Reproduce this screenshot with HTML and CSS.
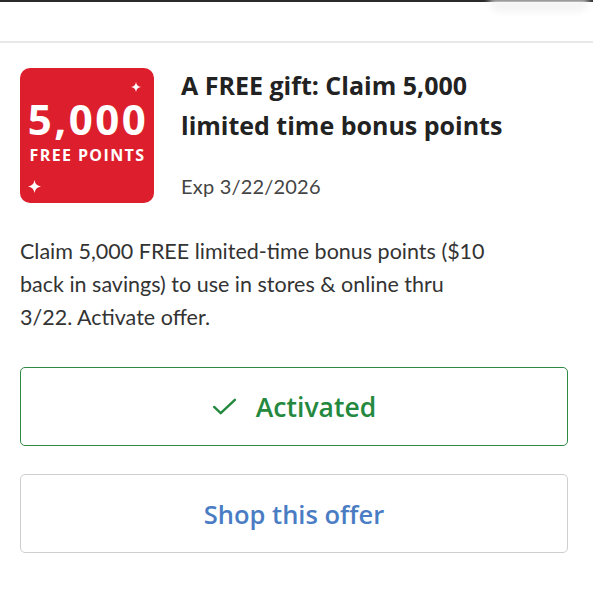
FILE: index.html
```html
<!DOCTYPE html>
<html lang="en">
<head>
    <meta charset="UTF-8">
    <meta name="viewport" content="width=device-width, initial-scale=1.0">
    <title>Offer</title>
    <link rel="stylesheet" href="styles.css">
</head>
<body>
    <div class="topbar">
        <div class="topbar-shadow"></div>
    </div>

    <div class="card">
        <div class="offer-head">
            <div class="badge">
                <svg class="spark spark-top" viewBox="0 0 10 10"><path d="M5 0 Q5.6 4.4 10 5 Q5.6 5.6 5 10 Q4.4 5.6 0 5 Q4.4 4.4 5 0Z" fill="#fff"/></svg>
                <div class="badge-num">5,000</div>
                <div class="badge-label">FREE POINTS</div>
                <svg class="spark spark-bottom" viewBox="0 0 10 10"><path d="M5 0 Q5.6 4.4 10 5 Q5.6 5.6 5 10 Q4.4 5.6 0 5 Q4.4 4.4 5 0Z" fill="#fff"/></svg>
            </div>
            <div class="offer-info">
                <h2 class="title">A FREE gift: Claim 5,000 limited time bonus points</h2>
                <div class="exp">Exp 3/22/2026</div>
            </div>
        </div>

        <p class="desc">Claim 5,000 FREE limited-time bonus points ($10 back in savings) to use in stores &amp; online thru 3/22. Activate offer.</p>

        <button class="btn btn-active" type="button">
            <svg class="check" viewBox="0 0 26 18"><path d="M2 9.5 L9 16 L24 2" fill="none" stroke="#24893f" stroke-width="2.6" stroke-linecap="round" stroke-linejoin="round"/></svg>
            Activated
        </button>
        <button class="btn btn-shop" type="button">Shop this offer</button>
    </div>
</body>
</html>
```

FILE: styles.css
```css
body {
    margin: 0;
    padding: 0;
    background: #fff;
    font-family: Lato, "Noto Sans", sans-serif;
    color: #333;
}
.topbar {
    height: 39px;
    border-top: 2px solid #2b2b2b;
    border-bottom: 2px solid #e8e8e8;
    position: relative;
}
/* faint shadow blob at the top right */
.topbar-shadow {
    position: absolute;
    top: -2px;
    right: 4px;
    width: 100px;
    height: 12px;
    border-radius: 0 0 50px 50px;
    background: #f4f4f4;
    filter: blur(3px);
}
.card {
    padding: 25px 25px 0 20px;
}
.offer-head {
    display: flex;
    gap: 27px;
    padding-right: 20px;
}
.badge {
    width: 134px;
    height: 135px;
    box-sizing: border-box;
    padding-bottom: 8px;
    flex: none;
    background: #dd1f2d;
    border-radius: 10px;
    color: #fff;
    position: relative;
    display: flex;
    flex-direction: column;
    align-items: center;
    justify-content: center;
    font-family: "Open Sans", sans-serif;
}
.badge-num {
    font-weight: 700;
    font-size: 42px;
    line-height: 36px;
    letter-spacing: 2.5px;
    margin-left: 2px;
    margin-bottom: 10px;
}
.badge-label {
    font-weight: 700;
    font-size: 16px;
    line-height: 16px;
    letter-spacing: 1.4px;
    margin-left: 1px;
}
.spark {
    position: absolute;
    width: 10px;
    height: 10px;
}
.spark-top {
    top: 14px;
    right: 13px;
}
.spark-bottom {
    bottom: 10px;
    left: 8px;
    width: 13px;
    height: 13px;
}
.offer-info {
    display: flex;
    flex-direction: column;
}
.title {
    margin: 0;
    font-family: "Open Sans", sans-serif;
    font-size: 25px;
    line-height: 40px;
    font-weight: 700;
    color: #222;
    margin-top: -3px;
}
.exp {
    margin-top: 29px;
    font-size: 20px;
    letter-spacing: 0.2px;
    color: #444;
}
.desc {
    max-width: 474px;
    margin: 32px 0 33px;
    font-size: 21.5px;
    line-height: 33px;
    color: #333;
}
.btn {
    display: flex;
    align-items: center;
    justify-content: center;
    gap: 19px;
    width: 548px;
    height: 79px;
    background: #fff;
    border-radius: 5px;
    font-family: "Open Sans", sans-serif;
    cursor: pointer;
}
.btn-active {
    border: 1.5px solid #2d8a45;
    color: #24893f;
    font-size: 26.5px;
    font-weight: 600;
    margin-bottom: 28px;
}
.check {
    width: 25px;
    height: 17px;
}
.btn-shop {
    border: 1.5px solid #cfcfcf;
    color: #4a7cc4;
    font-size: 25.5px;
    font-weight: 600;
}
```
